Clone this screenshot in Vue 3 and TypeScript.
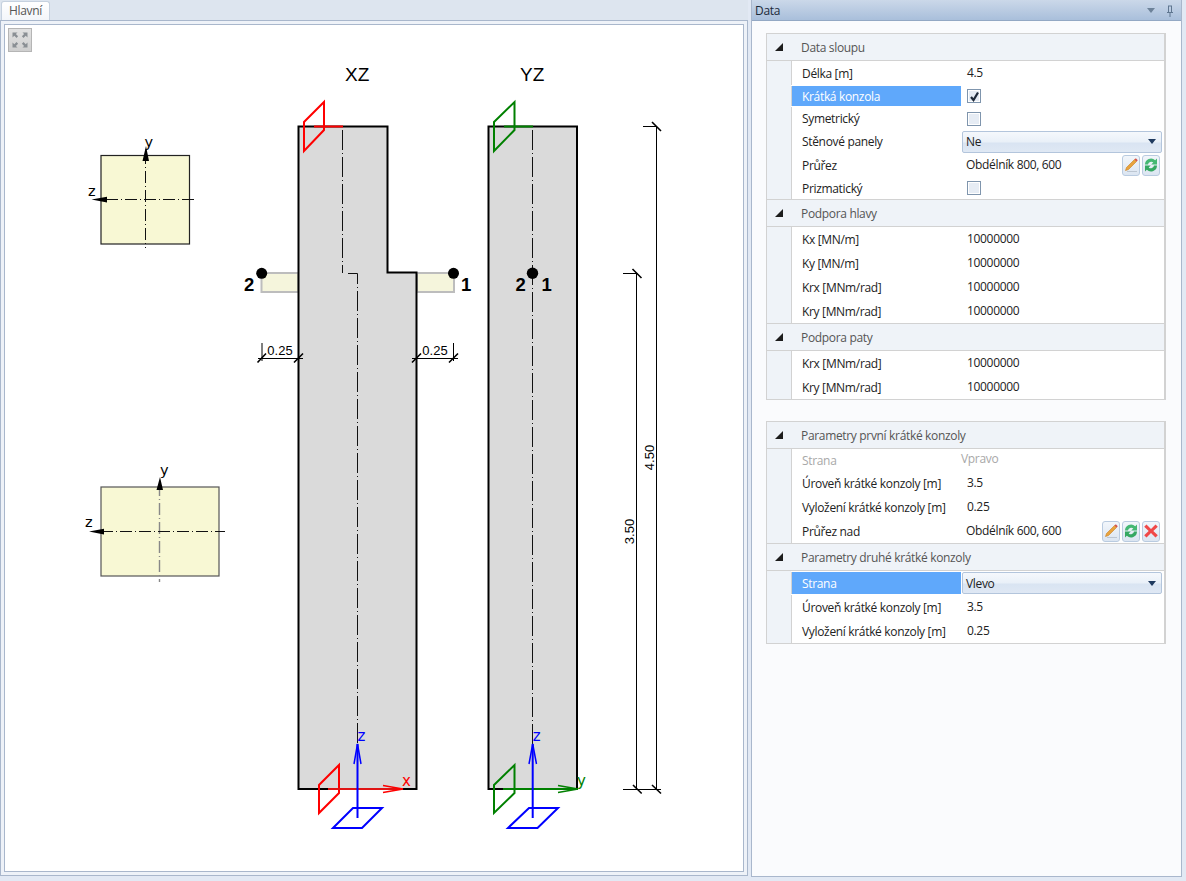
<script setup lang="ts">
type Row = {
  label: string
  kind?: 'text' | 'check' | 'combo'
  value?: string
  h: number
  checked?: boolean
  selected?: boolean
  disabled?: boolean
  tools?: string[]
}

type Section = { title: string; rows: Row[] }

const firstGroup: Section[] = [
  {
    title: 'Data sloupu',
    rows: [
      { label: 'Délka [m]', value: '4.5', h: 24 },
      { label: 'Krátká konzola', kind: 'check', checked: true, selected: true, h: 22 },
      { label: 'Symetrický', kind: 'check', h: 23 },
      { label: 'Stěnové panely', kind: 'combo', value: 'Ne', h: 23 },
      { label: 'Průřez', value: 'Obdélník 800, 600', tools: ['edit', 'refresh'], h: 24 },
      { label: 'Prizmatický', kind: 'check', h: 22 }
    ]
  },
  {
    title: 'Podpora hlavy',
    rows: [
      { label: 'Kx [MN/m]', value: '10000000', h: 24 },
      { label: 'Ky [MN/m]', value: '10000000', h: 24 },
      { label: 'Krx [MNm/rad]', value: '10000000', h: 24 },
      { label: 'Kry [MNm/rad]', value: '10000000', h: 24 }
    ]
  },
  {
    title: 'Podpora paty',
    rows: [
      { label: 'Krx [MNm/rad]', value: '10000000', h: 24 },
      { label: 'Kry [MNm/rad]', value: '10000000', h: 24 }
    ]
  }
]

const secondGroup: Section[] = [
  {
    title: 'Parametry první krátké konzoly',
    rows: [
      { label: 'Strana', value: 'Vpravo', disabled: true, h: 22 },
      { label: 'Úroveň krátké konzoly [m]', value: '3.5', h: 24 },
      { label: 'Vyložení krátké konzoly [m]', value: '0.25', h: 24 },
      { label: 'Průřez nad', value: 'Obdélník 600, 600', tools: ['edit', 'refresh', 'remove'], h: 24 }
    ]
  },
  {
    title: 'Parametry druhé krátké konzoly',
    rows: [
      { label: 'Strana', kind: 'combo', value: 'Vlevo', selected: true, h: 24 },
      { label: 'Úroveň krátké konzoly [m]', value: '3.5', h: 24 },
      { label: 'Vyložení krátké konzoly [m]', value: '0.25', h: 24 }
    ]
  }
]

const groups = [firstGroup, secondGroup]

const sectionDash = '12 3 1 3'
const columnDash = '20 3 1 3'
</script>

<template>
  <div class="app">
    <div class="left">
      <div class="tabs">
        <div class="tab">Hlavní</div>
      </div>
      <div class="viewer">
        <div class="canvas">
          <button class="expand">
            <svg width="20" height="20" viewBox="0 0 20 20">
              <g fill="#8a8f94">
                <path d="M2.5 2.5h5l-1.6 1.6 2.2 2.2-1.6 1.6-2.2-2.2-1.8 1.8z" />
                <path d="M17.5 2.5h-5l1.6 1.6-2.2 2.2 1.6 1.6 2.2-2.2 1.8 1.8z" />
                <path d="M2.5 17.5h5l-1.6-1.6 2.2-2.2-1.6-1.6-2.2 2.2-1.8-1.8z" />
                <path d="M17.5 17.5h-5l1.6-1.6-2.2-2.2 1.6-1.6 2.2 2.2 1.8-1.8z" />
              </g>
            </svg>
          </button>
          <svg class="drawing" width="738" height="846" viewBox="5 25 738 846">
            <!-- section 800x600 -->
            <rect x="101" y="155.5" width="88.5" height="88.5" fill="#f8f8d4" stroke="#222" stroke-width="1.2" />
            <path d="M145.5 152V248M106 199.5H194" stroke="#111" fill="none" :stroke-dasharray="sectionDash" />
            <path d="M146 146L149 161H142.5Z M91.5 199.5L107 196.8V202.5Z" fill="#000" />
            <text x="144.5" y="147" class="axis-txt">y</text>
            <text x="88" y="196" class="axis-txt">z</text>

            <!-- section 600x600 -->
            <rect x="101" y="487" width="118" height="89" fill="#f8f8d4" stroke="#555" stroke-width="1.2" />
            <path d="M159.5 484V582" stroke="#888" stroke-width="1.4" fill="none" :stroke-dasharray="sectionDash" />
            <path d="M101 531.5H225" stroke="#111" fill="none" :stroke-dasharray="sectionDash" />
            <path d="M160 477L163 490H156.5Z M89 531.5L104 528.8V534.5Z" fill="#000" />
            <text x="160" y="475" class="axis-txt">y</text>
            <text x="85" y="527" class="axis-txt">z</text>

            <!-- XZ view -->
            <text x="345" y="81" class="title">XZ</text>
            <rect x="261.5" y="273" width="37" height="19" fill="#f5f5dc" stroke="#bdbdbd" stroke-width="2" />
            <rect x="417" y="273" width="37" height="19" fill="#f5f5dc" stroke="#bdbdbd" stroke-width="2" />
            <path d="M298.5 126.5H387.5V272.5H416.5V789H298.5Z" fill="#dadada" stroke="#000" stroke-width="2" />
            <path d="M342.5 130V273" stroke="#111" fill="none" :stroke-dasharray="columnDash" />
            <path d="M348 273.5H357.5V744" stroke="#111" fill="none" :stroke-dasharray="columnDash" />
            <circle cx="261.7" cy="273.3" r="5.5" fill="#000" />
            <circle cx="453.5" cy="273.3" r="5.5" fill="#000" />
            <text x="244" y="291" class="node">2</text>
            <text x="461" y="291" class="node">1</text>

            <!-- YZ view -->
            <text x="520" y="81" class="title">YZ</text>
            <rect x="488.5" y="126.5" width="88.5" height="662.5" fill="#dadada" stroke="#000" stroke-width="2" />
            <path d="M532.5 130V744" stroke="#111" fill="none" :stroke-dasharray="columnDash" />
            <circle cx="532.5" cy="273.3" r="5.7" fill="#000" />
            <text x="515.5" y="291" class="node">2</text>
            <text x="541.5" y="291" class="node">1</text>

            <!-- widths of the corbels -->
            <g stroke="#000" fill="none">
              <path d="M262 343V361M258 358.5H303M453.5 343V361M412 358.5H458" />
              <path stroke-width="1.6" d="M257.5 362.5L266 353.5M294 362.5L303 353.5M412 362.5L421 353.5M449 362.5L458 353.5" />
            </g>
            <text x="280" y="355" class="dim" text-anchor="middle">0.25</text>
            <text x="435" y="355" class="dim" text-anchor="middle">0.25</text>

            <!-- heights -->
            <g stroke="#000" fill="none">
              <path d="M643 126.5H657M656.5 126.5V789M623 273.5H637.5M636.5 273.5V789M623 789.5H661" />
              <path stroke-width="1.6" d="M652 122L661 131M632.5 269L641.5 278M633 785L641.7 793.5M652 785L661 793.5" />
            </g>
            <text class="dim" text-anchor="middle" transform="translate(654 457.5) rotate(-90)">4.50</text>
            <text class="dim" text-anchor="middle" transform="translate(634 531.5) rotate(-90)">3.50</text>

            <!-- top planes -->
            <g fill="none" stroke-width="2">
              <path d="M304 122L324 102V130L304 151Z" stroke="#f00" />
              <path d="M314 126.5H343" stroke="#f00" />
              <path d="M494 122L514.5 102V130L494 151Z" stroke="#008000" />
              <path d="M504 126.5H533" stroke="#008000" />
            </g>

            <!-- local axes XZ -->
            <g fill="none" stroke-width="2">
              <path d="M319 785L339 765V793L319 813Z" stroke="#f00" />
              <path d="M333 828L353 808H382L362 828Z" stroke="#00f" />
              <path d="M328 789H403" stroke="#e01515" />
              <path d="M383 785.5L403 789L383 792.5" stroke="#f00" stroke-width="1.5" />
              <path d="M357.5 818V744" stroke="#00f" />
              <path d="M354 764L357.5 744L361 764" stroke="#00f" stroke-width="1.5" />
            </g>
            <text x="357.5" y="741" class="blue-txt">z</text>
            <text x="402" y="785.5" class="red-txt">x</text>

            <!-- local axes YZ -->
            <g fill="none" stroke-width="2">
              <path d="M494 785L514.5 765V793L494 813Z" stroke="#008000" />
              <path d="M508 828L529 808H558L537.5 828Z" stroke="#00f" />
              <path d="M503 789H578" stroke="#008000" />
              <path d="M558 785.5L578 789L558 792.5" stroke="#008000" stroke-width="1.5" />
              <path d="M532.7 818V744" stroke="#00f" />
              <path d="M529 764L532.7 744L536.5 764" stroke="#00f" stroke-width="1.5" />
            </g>
            <text x="532.7" y="741" class="blue-txt">z</text>
            <text x="577" y="786" class="green-txt">y</text>
          </svg>
        </div>
      </div>
    </div>

    <div class="right">
      <div class="pane-head">
        <span>Data</span>
        <span class="pane-icons">
          <svg width="8" height="5" viewBox="0 0 8 5"><path d="M0 0H8L4 5Z" fill="#6d8299" /></svg>
          <svg width="8" height="12" viewBox="0 0 8 12">
            <path d="M2 1H6M2.5 1V7M5.5 1V7M1 7.5H7M4 8V12" stroke="#5f7690" fill="none" />
          </svg>
        </span>
      </div>
      <div class="pane-body">
        <div v-for="(group, g) in groups" :key="g" class="grid">
          <template v-for="section in group" :key="section.title">
            <div class="sec-head">
              <svg class="sec-arrow" width="8" height="8" viewBox="0 0 8 8"><path d="M0 8H8V0Z" fill="#1c1c1c" /></svg>
              <span>{{ section.title }}</span>
            </div>
            <div class="sec-body">
              <div
                v-for="row in section.rows"
                :key="row.label"
                class="row"
                :style="{ height: row.h + 'px' }"
              >
                <div class="lbl" :class="{ sel: row.selected, off: row.disabled }">{{ row.label }}</div>
                <div class="val" :class="{ off: row.disabled }">
                  <span v-if="row.kind === 'check'" class="chk">
                    <svg v-if="row.checked" width="11" height="11" viewBox="0 0 11 11">
                      <path d="M2 6L4.5 9L9 1.5" fill="none" stroke="#1f2a3a" stroke-width="2.2" />
                    </svg>
                  </span>
                  <div v-else-if="row.kind === 'combo'" class="combo">
                    <span>{{ row.value }}</span>
                    <svg width="8" height="5" viewBox="0 0 8 5"><path d="M0 0H8L4 5Z" fill="#1f3a5f" /></svg>
                  </div>
                  <template v-else>
                    <span class="val-txt" :class="{ tight: row.tools }">{{ row.value }}</span>
                    <span v-if="row.tools" class="tools">
                      <button v-for="t in row.tools" :key="t" class="tool">
                        <svg v-if="t === 'edit'" width="16" height="16" viewBox="0 0 16 16">
                          <path d="M2.5 13.5L3.5 10.5L11.5 2.5L13.5 4.5L5.5 12.5Z" fill="#e8a33d" stroke="#c97f22" stroke-width=".6" />
                          <path d="M11.5 2.5L12.8 1.2L14.8 3.2L13.5 4.5Z" fill="#d4524f" />
                          <path d="M4 14.5H14" stroke="#bcc6d2" />
                        </svg>
                        <svg v-else-if="t === 'refresh'" width="16" height="16" viewBox="0 0 16 16">
                          <path d="M2 7.5A6 6 0 0 1 12.2 3.2L14 1.5V7.5H8.2L10.3 5.5A3.2 3.2 0 0 0 5 7.5Z" fill="#45b873" />
                          <path d="M14 8.5A6 6 0 0 1 3.8 12.8L2 14.5V8.5H7.8L5.7 10.5A3.2 3.2 0 0 0 11 8.5Z" fill="#35a862" />
                        </svg>
                        <svg v-else width="16" height="16" viewBox="0 0 16 16">
                          <path d="M3.5 1.5L8 6L12.5 1.5L14.8 3.8L10.3 8L14.8 12.2L12.5 14.5L8 10L3.5 14.5L1.2 12.2L5.7 8L1.2 3.8Z" fill="#f04848" />
                        </svg>
                      </button>
                    </span>
                  </template>
                </div>
              </div>
            </div>
          </template>
        </div>
      </div>
    </div>
  </div>
</template>

<style>
html,
body {
  margin: 0;
  background: #e2e9f4;
}
</style>

<style scoped>
.app {
  width: 1186px;
  height: 881px;
  display: flex;
  overflow: hidden;
  background: #e2e9f4;
  font-family: "Open Sans", "Liberation Sans", sans-serif;
  font-size: 12px;
  letter-spacing: -0.33px;
  color: #222;
}

.left {
  width: 748px;
  height: 876px;
  display: flex;
  flex-direction: column;
  background: #dde5ef;
}

.tabs {
  height: 20px;
  padding-left: 1px;
  flex-shrink: 0;
}

.tab {
  width: 49px;
  height: 19px;
  margin-top: 1px;
  box-sizing: border-box;
  text-align: center;
  line-height: 18px;
  color: #555;
  background: linear-gradient(#fff, #f3f6fa);
  border: 1px solid #c6d1df;
  border-bottom: 0;
  border-radius: 3px 3px 0 0;
}

.viewer {
  flex: 1;
  padding: 3px;
  background: #eef2f8;
  border: 1px solid #a9b7cc;
  display: flex;
}

.canvas {
  flex: 1;
  position: relative;
  background: #fff;
  border: 1px solid #a9b7cc;
  overflow: hidden;
}

.drawing {
  display: block;
}

.expand {
  position: absolute;
  left: 3px;
  top: 3px;
  width: 24px;
  height: 24px;
  padding: 1px;
  border: 1px solid #b5b5b5;
  background: linear-gradient(#e2e2e2, #cfcfcf);
  display: flex;
  align-items: center;
  justify-content: center;
}

.title {
  font: 19px "Liberation Sans", sans-serif;
  letter-spacing: 0;
  fill: #000;
}

.axis-txt {
  font: 14.5px "DejaVu Sans", sans-serif;
  letter-spacing: 0;
  fill: #000;
}

.blue-txt,
.red-txt,
.green-txt {
  font: 15px "DejaVu Sans", sans-serif;
  letter-spacing: 0;
}

.blue-txt {
  fill: #00f;
}

.red-txt {
  fill: #f00;
}

.green-txt {
  fill: #008000;
}

.node {
  font: bold 18.5px "Liberation Sans", sans-serif;
  letter-spacing: 0;
  fill: #000;
}

.dim {
  font: 13px "Liberation Sans", sans-serif;
  letter-spacing: 0;
  fill: #000;
}

.right {
  margin-left: 3px;
  width: 429px;
  height: 876px;
  display: flex;
  flex-direction: column;
  border-left: 1px solid #a9b7cc;
  border-right: 1px solid #a9b7cc;
  border-bottom: 1px solid #a9b7cc;
}

.pane-head {
  height: 21px;
  flex-shrink: 0;
  padding: 1px 7px 0 3px;
  display: flex;
  align-items: center;
  justify-content: space-between;
  background: linear-gradient(#cbd8e9, #a9bfdb);
  border-bottom: 1px solid #93a8c4;
  color: #1c2a3a;
  box-sizing: border-box;
}

.pane-icons {
  display: flex;
  align-items: center;
  gap: 11px;
}

.pane-body {
  flex: 1;
  background: #fafbfd;
  padding: 12px 0 0 14px;
  display: flex;
  flex-direction: column;
  gap: 21px;
}

.grid {
  width: 400px;
  border: 1px solid #d2d2d2;
  border-width: 1px 2px 1px 1px;
  box-sizing: border-box;
  background: #fff;
}

.sec-head {
  height: 26px;
  display: flex;
  align-items: center;
  background: #eff3f8;
  color: #555;
  border-bottom: 1px solid #d2d2d2;
}

.sec-arrow {
  margin-left: 8px;
  margin-right: 18px;
}

.sec-body {
  background: #eff3f8;
  padding-left: 24px;
  border-bottom: 1px solid #d2d2d2;
}

.sec-body:last-child {
  border-bottom: 0;
}

.row {
  display: flex;
  background: #fff;
}

.lbl {
  width: 170px;
  flex-shrink: 0;
  padding-left: 10px;
  box-sizing: border-box;
  border-left: 1px solid #d2d2d2;
  display: flex;
  align-items: center;
  color: #222;
}

.lbl.sel {
  margin: 1px 0;
  background: #5fa8fb;
  color: #fff;
}

.lbl.off,
.val.off {
  color: #a8a8a8;
}

.val {
  flex: 1;
  display: flex;
  align-items: center;
  padding-left: 6px;
  padding-right: 4px;
  min-width: 0;
}

.val-txt {
  flex: 1;
  margin-bottom: 2px;
}

.val-txt.tight {
  margin-left: -1px;
}

.val.off .val-txt {
  margin-left: -6px;
  margin-bottom: 4px;
}

.chk {
  width: 12px;
  height: 12px;
  border: 1px solid #7f95ad;
  box-shadow: inset 0 0 0 1px #fff;
  background: #e6ecf4;
  display: flex;
  align-items: center;
  justify-content: center;
}

.combo {
  flex: 1;
  height: 22px;
  margin-left: -5px;
  margin-right: -2px;
  padding: 0 5px 0 3px;
  box-sizing: border-box;
  display: flex;
  align-items: center;
  justify-content: space-between;
  border: 1px solid #b3c5dc;
  border-radius: 2px;
  background: linear-gradient(#f5f8fc 0%, #e9f0f8 50%, #d9e4f2 55%, #dfe8f4 100%);
}

.tools {
  display: flex;
  gap: 2px;
}

.tool {
  width: 18px;
  height: 21px;
  padding: 0;
  border: 1px solid #b9cbe0;
  border-radius: 3px;
  background: linear-gradient(#f2f6fb, #dbe5f1);
  display: flex;
  align-items: center;
  justify-content: center;
}
</style>
